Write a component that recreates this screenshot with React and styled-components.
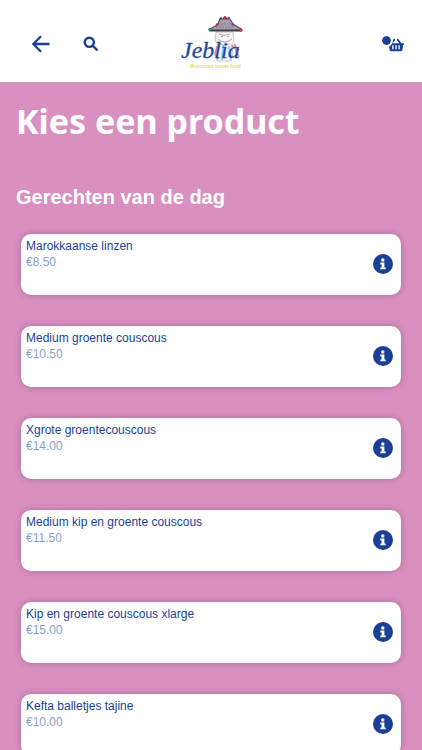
import React from "react";
import styled, { createGlobalStyle } from "styled-components";
import { FaShoppingBasket } from "react-icons/fa";

const navy = "#1a3f94";
const pink = "#d98fc0";

const GlobalStyle = createGlobalStyle`
  *, *::before, *::after { box-sizing: border-box; }
  body {
    margin: 0;
    background: ${pink};
    color: ${navy};
    font-family: "Liberation Sans", Arial, Helvetica, sans-serif;
  }
`;

const Header = styled.header`
  display: grid;
  grid-template-columns: 1fr auto 1fr;
  align-items: center;
  height: 82px;
  padding: 0 18px;
  background: #fff;
`;

const HeaderActions = styled.div`
  display: flex;
  align-items: center;
  justify-content: ${({ $end }) => ($end ? "flex-end" : "flex-start")};
  gap: 32px;
  padding: ${({ $end }) => ($end ? "8px 0 0" : "6px 0 0 13px")};
`;

const IconButton = styled.button`
  display: inline-flex;
  align-items: center;
  justify-content: center;
  padding: 0;
  border: 0;
  background: none;
  color: ${navy};
  cursor: pointer;
`;

const BasketButton = styled(IconButton)`
  position: relative;
`;

const BasketBadge = styled.span`
  position: absolute;
  top: -3px;
  left: -8px;
  width: 13px;
  height: 13px;
  border: 2px solid #fff;
  border-radius: 50%;
  background: ${navy};
  background-clip: padding-box;
`;

const LogoLink = styled.a`
  display: block;
  line-height: 0;
`;

const Main = styled.main`
  padding: 15px 16px 32px;
`;

const Title = styled.h1`
  margin: 0;
  color: #fff;
  font: 700 34px/48px "Noto Sans", "Open Sans", sans-serif;
`;

const SectionTitle = styled.h2`
  margin: 40px 0 25px;
  color: #fff;
  font-size: 20px;
  line-height: 24px;
`;

const ProductList = styled.ul`
  display: grid;
  gap: 31px;
  margin: 0;
  padding: 0 5px;
  list-style: none;
`;

const ProductCard = styled.li`
  display: flex;
  align-items: center;
  justify-content: space-between;
  height: 61px;
  padding: 4px 8px 5px 5px;
  border-radius: 10px;
  background: #fff;
  box-shadow: 0 0 7px rgba(0, 0, 0, 0.22);
`;

const ProductText = styled.div`
  align-self: flex-start;
  font-size: 12px;
  line-height: 16px;
`;

const ProductName = styled.h3`
  margin: 0;
  font: inherit;
`;

const Price = styled.p`
  margin: 0;
  color: #8c9fc9;
`;

const products = [
  ["Marokkaanse linzen", "€8.50"],
  ["Medium groente couscous", "€10.50"],
  ["Xgrote groentecouscous", "€14.00"],
  ["Medium kip en groente couscous", "€11.50"],
  ["Kip en groente couscous xlarge", "€15.00"],
  ["Kefta balletjes tajine", "€10.00"],
];

function InfoIcon() {
  return (
    <svg width="20" height="20" viewBox="0 0 20 20" aria-hidden="true">
      <circle cx="10" cy="10" r="10" fill="currentColor" />
      <circle cx="9.800" cy="6" r="1.700" fill="#fff" />
      <path d="M7.300 8.600h4.100v4.800h1.300v1.900H7.300v-1.900h1.300v-2.900H7.300z" fill="#fff" />
    </svg>
  );
}

function Logo() {
  return (
    <svg width="66" height="56" viewBox="0 0 66 56" role="img" aria-label="Jeblia Moroccan street food">
      {/* woman with scarf */}
      <path d="M38 19h17l1 8-3 6 2 7-2 8H39l-2-8 3-7-3-6z" fill="#f7f3f5" stroke="#b5aeb5" strokeWidth=".7" />
      <path d="M41 21q5 3 11 0M40 26q6 6 14 0M42 31q4 3 9 0M43 23.500h2M49 23.500h2" fill="none" stroke="#93909a" strokeWidth=".8" />
      <path d="M39 33l-2 8 3 5M54 32l4 5 3 7M56 31l5 6" fill="none" stroke="#e48b9b" strokeWidth="1.600" />
      <path d="M45 33l-1 14M51 33l2 13" fill="none" stroke="#8bd0f0" strokeWidth="2" />
      {/* straw hat */}
      <path d="M42 5h10l3 6 8 5-1 2H33l-1-2 8-5z" fill="#a5a1ab" />
      <path d="M42 5.500h9" fill="none" stroke="#39343f" strokeWidth="1.800" strokeDasharray="2 .8" />
      <path d="M40 11h14M38 14h18" fill="none" stroke="#7c7784" strokeWidth="1" strokeDasharray="2 1" />
      <path d="M32 17.500h31" fill="none" stroke="#3f3949" strokeWidth="2.200" strokeLinecap="round" />
      <path d="M33 15.500l7-4 2-6M52 6l3 5 8 5" fill="none" stroke="#6b4565" strokeWidth="1.200" />
      <circle cx="47" cy="4.500" r="1.400" fill="#d12d49" />
      <circle cx="51" cy="5" r="1.200" fill="#7547a0" />
      <circle cx="32" cy="16.500" r="1.700" fill="#28825b" />
      <circle cx="39" cy="11.500" r="1.300" fill="#c93149" />
      <circle cx="55" cy="11.500" r="1.300" fill="#7547a0" />
      <circle cx="63" cy="17" r="1.700" fill="#c32e54" />
      <text x="3" y="45" fill="#1f4b9d" stroke="#1f4b9d" strokeWidth=".3" fontFamily="Liberation Serif, Times New Roman, serif" fontStyle="italic" fontSize="24">Jeblia</text>
      <text x="12" y="55" fill="#dce34f" fontFamily="Liberation Sans, Arial, sans-serif" fontWeight="700" fontSize="5">Moroccan street food</text>
    </svg>
  );
}

export default function App() {
  return (
    <>
      <GlobalStyle />
      <Header>
        <HeaderActions>
          <IconButton aria-label="Terug">
            <svg width="20" height="20" viewBox="0 0 20 20" fill="none" stroke="currentColor" strokeWidth="2.300" strokeLinejoin="round">
              <path d="M18.500 10H2.500M10 2.300 2.300 10l7.700 7.700" />
            </svg>
          </IconButton>
          <IconButton aria-label="Zoeken">
            <svg width="16" height="16" viewBox="0 0 16 16" fill="none" stroke="currentColor" strokeWidth="2.400">
              <circle cx="6.300" cy="6.300" r="4.600" />
              <path d="m9.600 9.600 4.900 4.900" />
            </svg>
          </IconButton>
        </HeaderActions>
        <LogoLink href="#">
          <Logo />
        </LogoLink>
        <HeaderActions $end>
          <BasketButton aria-label="Winkelmand">
            <FaShoppingBasket size={16} />
            <BasketBadge />
          </BasketButton>
        </HeaderActions>
      </Header>
      <Main>
        <Title>Kies een product</Title>
        <SectionTitle>Gerechten van de dag</SectionTitle>
        <ProductList>
          {products.map(([name, price]) => (
            <ProductCard key={name}>
              <ProductText>
                <ProductName>{name}</ProductName>
                <Price>{price}</Price>
              </ProductText>
              <IconButton aria-label={`Informatie over ${name}`}>
                <InfoIcon />
              </IconButton>
            </ProductCard>
          ))}
        </ProductList>
      </Main>
    </>
  );
}
